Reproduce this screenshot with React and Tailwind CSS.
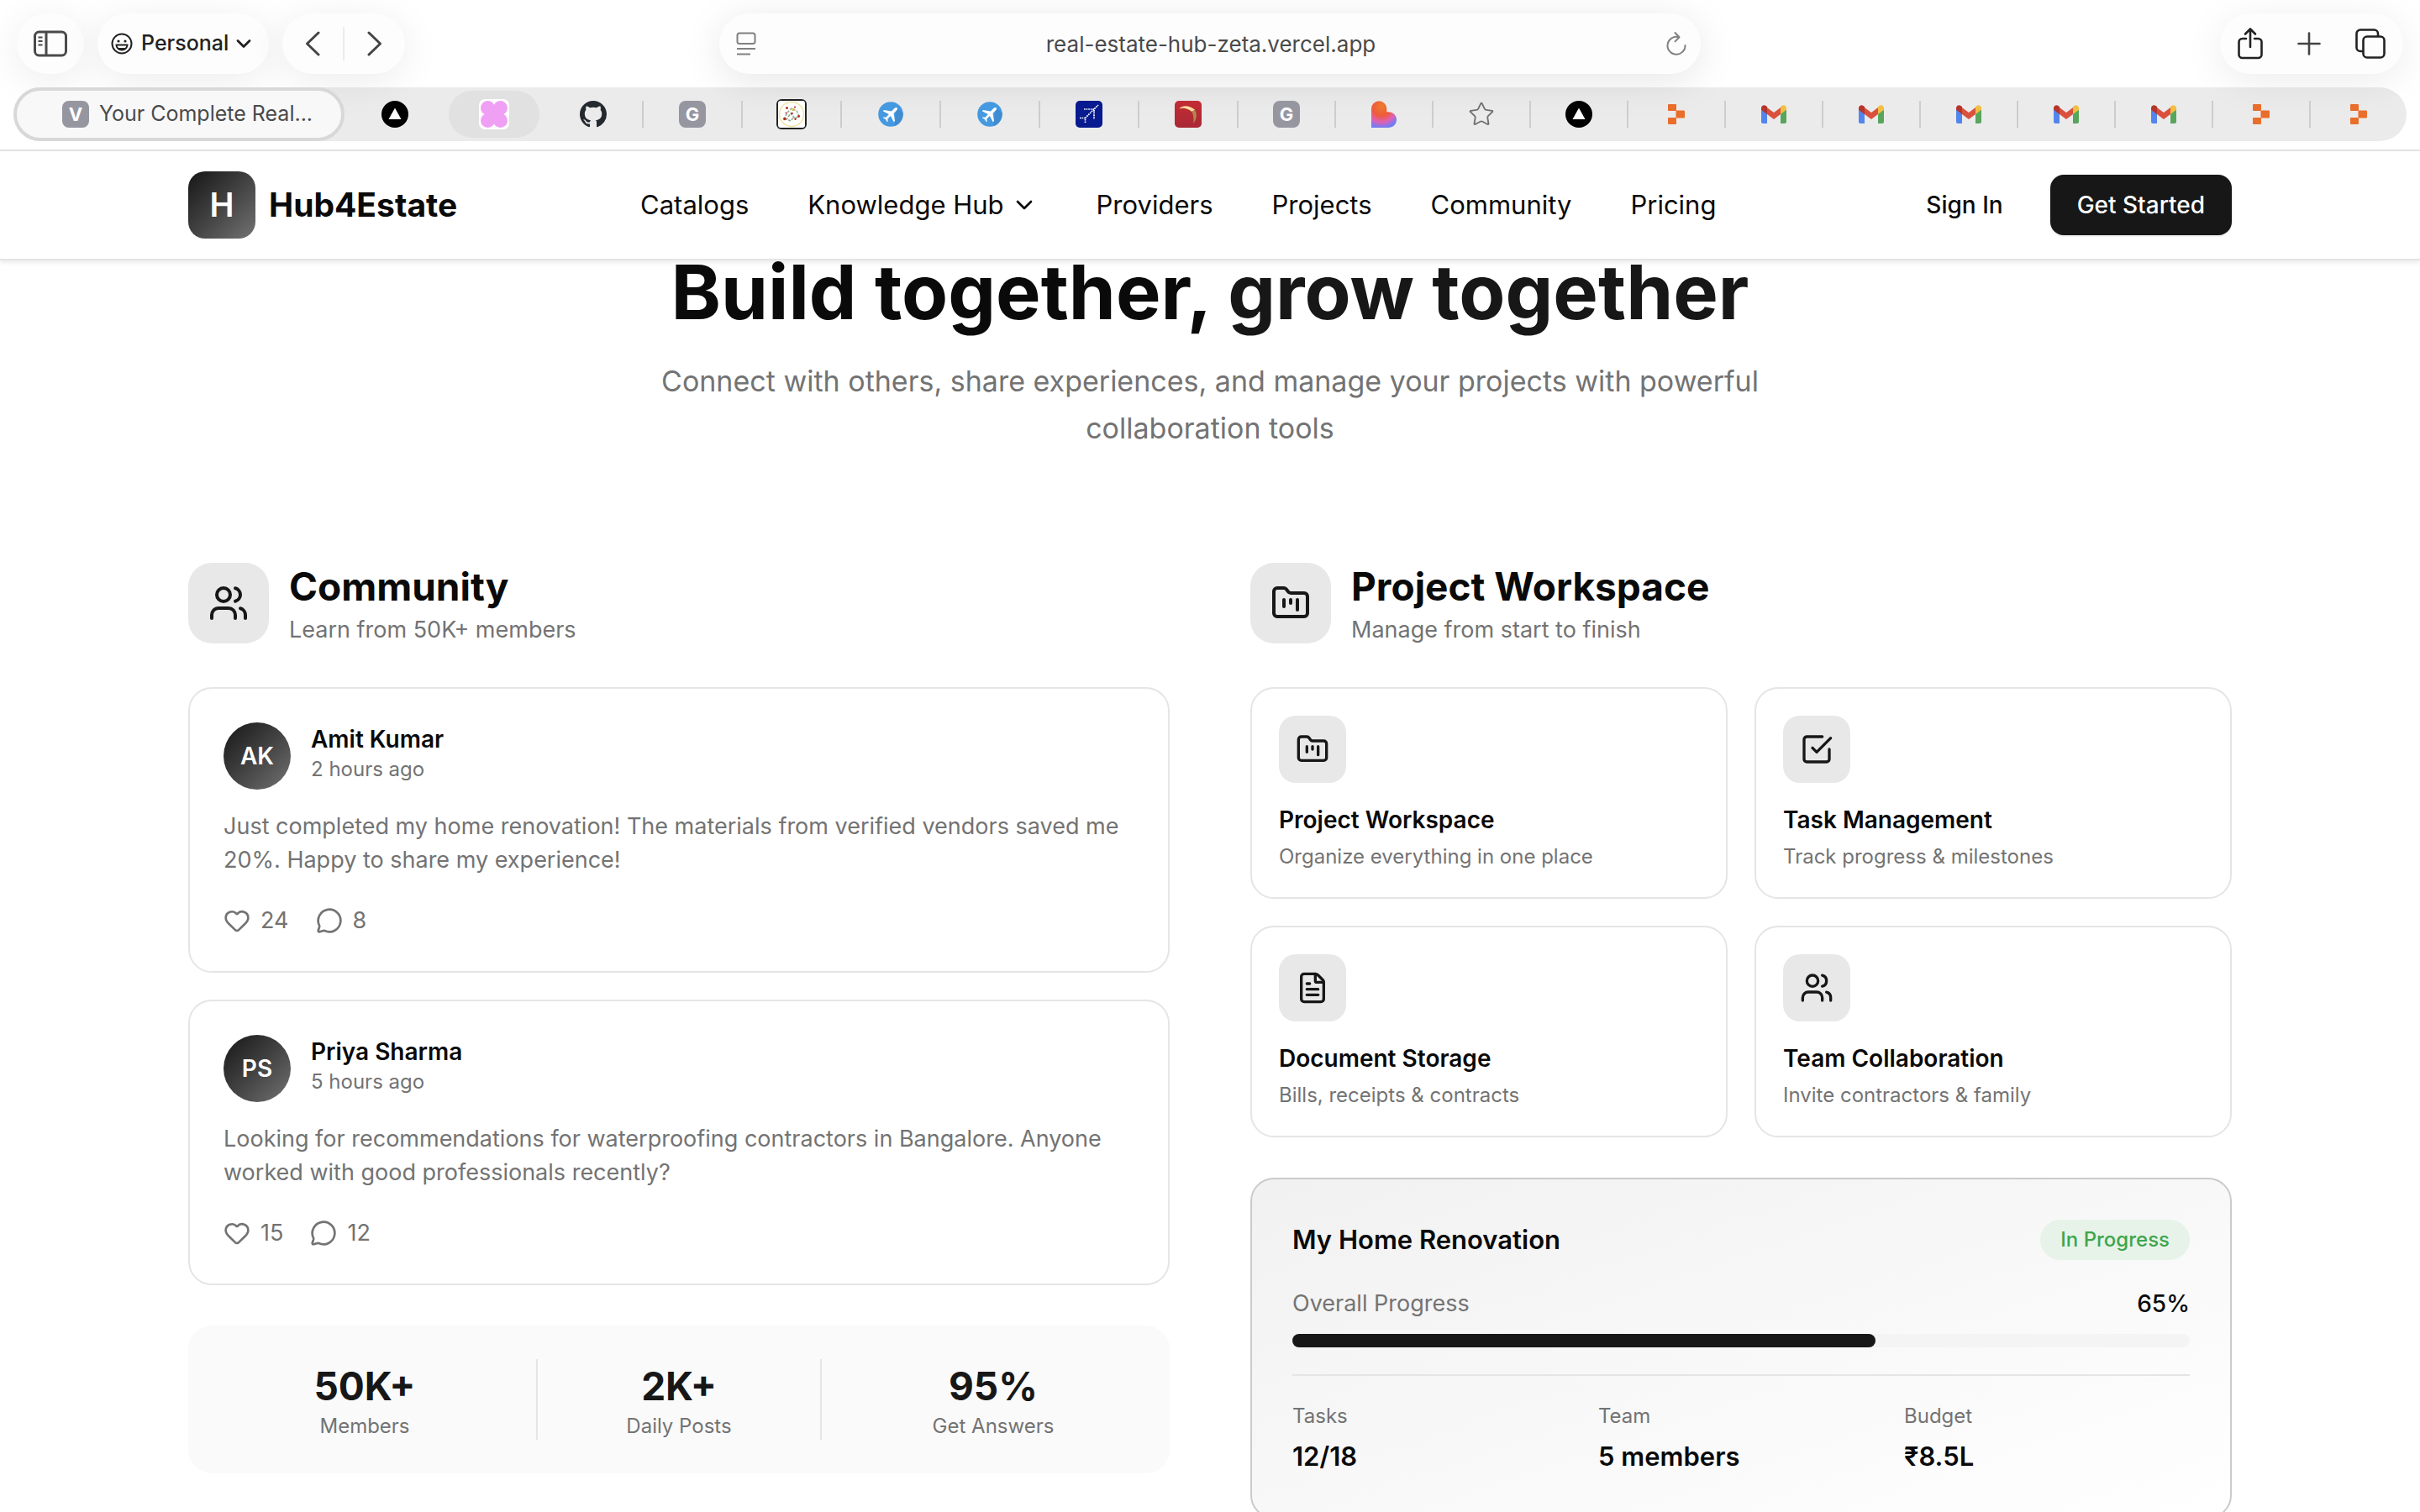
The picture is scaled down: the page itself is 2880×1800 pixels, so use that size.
import React from "react";
import {
  Users,
  FolderKanban,
  FileText,
  Heart,
  MessageCircle,
  ChevronDown,
  Star,
} from "lucide-react";

/* ---------- Browser chrome icons ---------- */

function SidebarIcon() {
  return (
    <svg viewBox="0 0 40 32" className="h-8 w-10" fill="none" stroke="#4a4a4a" strokeWidth="3">
      <rect x="1.5" y="2" width="37" height="28" rx="5" />
      <path d="M15 2v28" />
      <path d="M5.5 8.500h5M5.500 13h5M5.500 17.500h5" strokeWidth="2" />
    </svg>
  );
}

function SmileIcon() {
  return (
    <svg viewBox="0 0 26 26" className="mr-[6px] size-[26px]" fill="none" stroke="#222" strokeWidth="2">
      <circle cx="13" cy="13" r="11.500" />
      <circle cx="9" cy="10" r="1.600" fill="#222" stroke="none" />
      <circle cx="17" cy="10" r="1.600" fill="#222" stroke="none" />
      <path d="M6.500 14.500h13a6.500 6 0 0 1-13 0Z" />
      <path d="M8 18h10a5.500 4 0 0 1-10 0Z" fill="#222" stroke="none" />
    </svg>
  );
}

function BackIcon() {
  return (
    <svg viewBox="0 0 18 30" className="h-[30px] w-[18px]" fill="none" stroke="#444" strokeWidth="3" strokeLinecap="round" strokeLinejoin="round">
      <path d="M16 2 2.500 15 16 28" />
    </svg>
  );
}

function ForwardIcon() {
  return (
    <svg viewBox="0 0 18 30" className="h-[30px] w-[18px]" fill="none" stroke="#444" strokeWidth="3" strokeLinecap="round" strokeLinejoin="round">
      <path d="M2 2 15.500 15 2 28" />
    </svg>
  );
}

function ReaderIcon() {
  return (
    <svg viewBox="0 0 24 28" className="h-7 w-6" fill="none" stroke="#808080" strokeWidth="2">
      <rect x="1.500" y="1.500" width="21" height="12.500" rx="2.500" />
      <path d="M1 20h22M1 26.500h16" />
    </svg>
  );
}

function ReloadIcon() {
  return (
    <svg viewBox="0 0 26 30" className="h-[30px] w-[26px]" fill="none" stroke="#808080" strokeWidth="2" strokeLinecap="round" strokeLinejoin="round">
      <path d="M16 7.200A10.500 10.500 0 1 0 23.500 17" />
      <path d="M11.500 2l5 5.200-5 5.200" />
    </svg>
  );
}

function ShareIcon() {
  return (
    <svg viewBox="0 0 32 40" className="h-10 w-8" fill="none" stroke="#222" strokeWidth="2.600" strokeLinecap="round" strokeLinejoin="round">
      <path d="M11 14H6.500a4 4 0 0 0-4 4v15a4 4 0 0 0 4 4h19a4 4 0 0 0 4-4V18a4 4 0 0 0-4-4H21" />
      <path d="M16 24V3M10 8.500 16 2.500l6 6" />
    </svg>
  );
}

function PlusIcon() {
  return (
    <svg viewBox="0 0 28 28" className="size-7" fill="none" stroke="#444" strokeWidth="2.600" strokeLinecap="round">
      <path d="M14 1.500v25M1.500 14h25" />
    </svg>
  );
}

function TabsIcon() {
  return (
    <svg viewBox="0 0 38 38" className="size-[38px]" fill="none" stroke="#222" strokeWidth="2.600">
      <path d="M10.500 28H7a4.500 4.500 0 0 1-4.500-4.500V7A4.500 4.500 0 0 1 7 2.500h16.500A4.500 4.500 0 0 1 28 7v3" />
      <rect x="10.500" y="10.500" width="25" height="25" rx="4.500" />
    </svg>
  );
}

/* ---------- Favicons ---------- */

function LetterIcon({ letter }) {
  return (
    <span className="flex size-8 items-center justify-center rounded-lg bg-[#9696a1] text-[22px] leading-8 font-bold text-white">
      {letter}
    </span>
  );
}

function TriangleIcon() {
  return (
    <svg viewBox="0 0 32 32" className="size-8">
      <circle cx="16" cy="16" r="16" fill="#000" />
      <path d="M16 8.500 23.500 22h-15Z" fill="#fff" />
    </svg>
  );
}

function CloverIcon() {
  return (
    <svg viewBox="0 0 36 36" className="size-9">
      <rect width="36" height="36" rx="7" fill="#fff" />
      <g fill="#f0a0f4">
        <circle cx="10.500" cy="10.500" r="8.500" />
        <circle cx="25.500" cy="10.500" r="8.500" />
        <circle cx="10.500" cy="25.500" r="8.500" />
        <circle cx="25.500" cy="25.500" r="8.500" />
        <rect x="9" y="9" width="18" height="18" />
      </g>
    </svg>
  );
}

function GithubIcon() {
  return (
    <svg viewBox="0 0 16 16" className="size-8" fill="#24292f">
      <path d="M8 0C3.580 0 0 3.580 0 8c0 3.540 2.290 6.530 5.470 7.590.4.070.55-.17.55-.38 0-.19-.01-.82-.01-1.490-2.010.37-2.530-.49-2.690-.94-.09-.23-.48-.94-.82-1.130-.28-.15-.68-.52-.01-.53.63-.01 1.080.58 1.230.82.72 1.210 1.870.87 2.330.66.07-.52.28-.87.51-1.070-1.780-.2-3.640-.89-3.640-3.950 0-.87.31-1.590.82-2.150-.08-.2-.36-1.020.08-2.120 0 0 .67-.21 2.200.82.64-.18 1.320-.27 2-.27s1.360.09 2 .27c1.530-1.040 2.200-.82 2.200-.82.44 1.100.16 1.920.08 2.120.51.56.82 1.270.82 2.150 0 3.070-1.870 3.750-3.650 3.950.29.25.54.73.54 1.480 0 1.070-.01 1.930-.01 2.200 0 .21.15.46.55.38A8.010 8.010 0 0 0 16 8c0-4.420-3.580-8-8-8Z" />
    </svg>
  );
}

function WreathIcon() {
  return (
    <svg viewBox="0 0 36 36" className="size-9">
      <rect width="36" height="36" rx="6" fill="#222" />
      <rect x="2" y="2" width="32" height="32" rx="3" fill="#fff" />
      <circle cx="18" cy="18" r="14.500" fill="none" stroke="#f3e3a4" strokeWidth="1.500" />
      <path d="M9 24l4-8 5-5 6 3 3 6-5 3-5-6-5 7 5 2 4-5" fill="none" stroke="#93a88c" strokeWidth="1.600" strokeDasharray="3 1.500" />
      <g fill="#b02a2a">
        <circle cx="12.500" cy="10.500" r="1.500" />
        <circle cx="22" cy="9.500" r="1.100" />
        <circle cx="9.800" cy="23.500" r="1.800" />
        <circle cx="18.500" cy="17" r="1.300" />
        <circle cx="26.500" cy="20.500" r="1.400" />
        <circle cx="22.500" cy="23.800" r="1.200" />
        <circle cx="11.500" cy="16.500" r="1" />
      </g>
      <circle cx="20" cy="12.500" r="1.700" fill="#e6b74f" />
    </svg>
  );
}

function PlaneIcon() {
  return (
    <svg viewBox="0 0 32 32" className="size-8">
      <circle cx="16" cy="16" r="14.800" fill="#4599e0" />
      <path d="M23 8.500 30.500 14a14.800 14.800 0 0 1-10 16Z" fill="#3f8cd0" />
      <path d="M23.600 8.400c-.8-.8-2.200-.3-3.200.7l-3.400 3.300-9-1.400-1.300 1.300 7.200 3.800-3.500 3.600-2.800-.3-.9.900 3.300 1.700 1.700 3.300.9-.9-.3-2.800 3.600-3.500L19.700 25.300l1.300-1.300-1.400-9 3.300-3.400c1-1 1.500-2.400.7-3.200Z" fill="#fff" />
    </svg>
  );
}

function FlightPathIcon() {
  return (
    <svg viewBox="0 0 32 32" className="size-8">
      <rect width="32" height="32" rx="5" fill="#071a8f" />
      <path d="M10 10h12v12M5 20.500h6.500V27M11.500 20.500 27 5" fill="none" stroke="#fff" strokeWidth="1.700" strokeDasharray="1.700 .9" />
    </svg>
  );
}

function BoomerangIcon() {
  return (
    <svg viewBox="0 0 32 32" className="size-8">
      <defs>
        <linearGradient id="boomerang-bg" x1="0" y1="0" x2="0" y2="1">
          <stop offset="0" stopColor="#c42c34" />
          <stop offset="1" stopColor="#a92835" />
        </linearGradient>
      </defs>
      <rect width="32" height="32" rx="5" fill="url(#boomerang-bg)" />
      <path d="M5.500 9.500C9 5 17 5 24 10.500L20.500 13C15 9 10 8 5.500 9.500Z" fill="#fbdc9c" />
      <path d="M24 10.500c3 6 2 12-2 16.500 1-5 .5-10-1.500-14Z" fill="#b08a50" />
    </svg>
  );
}

function LovableIcon() {
  return (
    <svg viewBox="0 0 32 32" className="size-8">
      <defs>
        <radialGradient id="heart-fill" cx=".4" cy=".2" r=".9">
          <stop offset="0" stopColor="#ee7d2c" />
          <stop offset=".4" stopColor="#ee5a3c" />
          <stop offset=".65" stopColor="#e060b4" />
          <stop offset=".9" stopColor="#6f7cf8" />
        </radialGradient>
      </defs>
      <path d="M1 32V9.500a9 9 0 0 1 18.300 0v3.700h2.400a9.400 9.400 0 0 1 0 18.800Z" fill="url(#heart-fill)" />
    </svg>
  );
}

function ArrowBlocksIcon() {
  return (
    <svg viewBox="0 0 20 24" className="h-6 w-5" fill="#e96d2b">
      <rect x="0" y="0" width="10" height="8" rx="1" />
      <rect x="9.500" y="7.500" width="10.500" height="9" rx="1" />
      <rect x="0" y="16" width="10" height="8" rx="1" />
    </svg>
  );
}

function GmailIcon() {
  return (
    <svg viewBox="0 0 30 22" className="h-[22px] w-[30px]">
      <path d="M0 5v15a2 2 0 0 0 2 2h5V10Z" fill="#5286ec" />
      <path d="M30 5v15a2 2 0 0 1-2 2h-5V10Z" fill="#58a55c" />
      <path d="M7 3v8l8 6 8-6V3l-8 6Z" fill="#d9513e" />
      <path d="M0 3.500C0 .5 3.400-.8 5.600.9L7 2v9L0 5.700Z" fill="#b5352b" />
      <path d="M30 3.500c0-3-3.400-4.300-5.600-2.600L23 2v9l7-5.300Z" fill="#f2bf42" />
    </svg>
  );
}

const pinnedTabs = [
  { name: "Vercel", icon: <TriangleIcon />, wide: true },
  { name: "Clover", icon: <CloverIcon />, wide: true, hovered: true },
  { name: "GitHub", icon: <GithubIcon />, wide: true },
  { name: "G page", icon: <LetterIcon letter="G" />, wide: true, rule: true },
  { name: "Wreath", icon: <WreathIcon />, wide: true, rule: true },
  { name: "Flights", icon: <PlaneIcon />, wide: true, rule: true },
  { name: "Flights", icon: <PlaneIcon />, wide: true, rule: true },
  { name: "Flight path", icon: <FlightPathIcon />, wide: true, rule: true },
  { name: "Boomerang", icon: <BoomerangIcon />, wide: true, rule: true },
  { name: "G page", icon: <LetterIcon letter="G" />, rule: true },
  { name: "Lovable", icon: <LovableIcon />, rule: true },
  { name: "Favorites", icon: <Star className="size-8 text-[#707070]" strokeWidth={1.4} />, rule: true },
  { name: "Vercel", icon: <TriangleIcon />, rule: true },
  { name: "Blocks", icon: <ArrowBlocksIcon />, rule: true },
  { name: "Gmail", icon: <GmailIcon />, rule: true },
  { name: "Gmail", icon: <GmailIcon />, rule: true },
  { name: "Gmail", icon: <GmailIcon />, rule: true },
  { name: "Gmail", icon: <GmailIcon />, rule: true },
  { name: "Gmail", icon: <GmailIcon />, rule: true },
  { name: "Blocks", icon: <ArrowBlocksIcon />, rule: true },
  { name: "Blocks", icon: <ArrowBlocksIcon />, rule: true },
];

function BrowserChrome() {
  return (
    <div className="overflow-hidden border-b-2 border-[#e6e6e6] bg-white px-4 pt-4 pb-[10px]">
      <div className="flex h-[72px] items-center justify-between px-1">
        <div className="flex flex-1 gap-4">
          <button aria-label="Show sidebar" className="flex h-[72px] w-20 items-center justify-center rounded-full bg-[#fdfdfd] shadow-[0_8px_48px_rgba(0,0,0,0.08)]">
            <SidebarIcon />
          </button>
          <button className="flex h-[72px] items-center gap-1 rounded-full bg-[#fdfdfd] px-4 text-[25px] font-medium text-[#222] shadow-[0_8px_48px_rgba(0,0,0,0.08)]">
            <SmileIcon />
            Personal
            <ChevronDown className="size-7" strokeWidth={2.4} />
          </button>
          <div className="flex h-[72px] items-center rounded-full bg-[#fdfdfd] shadow-[0_8px_48px_rgba(0,0,0,0.08)]">
            <button aria-label="Back" className="flex h-full w-[72px] items-center justify-center">
              <BackIcon />
            </button>
            <span className="h-10 w-[2px] bg-[#ececec]" />
            <button aria-label="Forward" className="flex h-full w-[72px] items-center justify-center">
              <ForwardIcon />
            </button>
          </div>
        </div>
        <div className="flex h-[72px] w-[1168px] items-center rounded-full bg-[#fdfdfd] pr-4 pl-5 shadow-[0_8px_48px_rgba(0,0,0,0.1)]">
          <button aria-label="Reader view"><ReaderIcon /></button>
          <input
            aria-label="Address"
            defaultValue="real-estate-hub-zeta.vercel.app"
            className="min-w-0 flex-1 bg-transparent text-center text-[26px] text-[#4a4a4a] outline-none"
          />
          <button aria-label="Reload"><ReloadIcon /></button>
        </div>
        <div className="flex flex-1 justify-end">
          <div className="flex h-[72px] items-center gap-10 rounded-full bg-[#fdfdfd] px-5 shadow-[0_8px_48px_rgba(0,0,0,0.08)]">
            <button aria-label="Share"><ShareIcon /></button>
            <button aria-label="New tab"><PlusIcon /></button>
            <button aria-label="Show tabs"><TabsIcon /></button>
          </div>
        </div>
      </div>
      <div className="mt-4 flex h-16 items-center rounded-full bg-black/8">
        <button className="flex h-full w-[394px] shrink-0 items-center justify-center gap-3 rounded-full border-4 border-[#d8d8d8] bg-[#f8f8f8] pl-5 text-[25px] text-[#4a4a4a]">
          <LetterIcon letter="V" />
          Your Complete Real...
        </button>
        {pinnedTabs.map((tab, i) => (
          <div key={i} className={tab.wide ? "flex h-full flex-[118] items-center" : "flex h-full flex-[116] items-center"}>
            <span className={tab.rule ? "h-8 w-[2px] bg-[#cdcdcd]" : "h-8 w-[2px]"} />
            <button
              aria-label={tab.name}
              className={
                tab.hovered
                  ? "mx-1 flex h-14 flex-1 items-center justify-center rounded-full bg-[#e1e1e1]"
                  : "flex h-14 flex-1 items-center justify-center"
              }
            >
              {tab.icon}
            </button>
          </div>
        ))}
      </div>
    </div>
  );
}

/* ---------- Site ---------- */

function SiteHeader() {
  return (
    <header className="relative z-10 border-b-2 border-[#e5e5e5] bg-white shadow-[0_2px_6px_rgba(0,0,0,0.1)]">
      <div className="mx-auto flex h-32 max-w-[2560px] items-center justify-between px-16">
        <a href="#" className="flex items-center gap-4">
          <span className="flex size-20 items-center justify-center rounded-[20px] bg-linear-to-br from-[#171717] to-[#737373] text-[39px] font-semibold text-white">
            H
          </span>
          <span className="text-[39px] font-bold">Hub4Estate</span>
        </a>
        <nav className="flex items-center gap-[70px] text-[31px]">
          <a href="#">Catalogs</a>
          <button className="flex items-center gap-2">
            Knowledge Hub
            <ChevronDown className="size-8" />
          </button>
          <a href="#">Providers</a>
          <a href="#">Projects</a>
          <a href="#">Community</a>
          <a href="#">Pricing</a>
        </nav>
        <div className="flex items-center gap-6 text-[28px] font-medium">
          <a href="#" className="px-8">Sign In</a>
          <button className="h-[72px] rounded-2xl bg-[#171717] px-8 text-white shadow-sm">Get Started</button>
        </div>
      </div>
    </header>
  );
}

function SectionHeader({ icon: Icon, title, subtitle }) {
  return (
    <div className="mb-12 flex items-center gap-6">
      <span className="flex size-24 items-center justify-center rounded-[28px] bg-[#e8e8e8] text-[#171717]">
        <Icon className="size-12" />
      </span>
      <div>
        <h3 className="text-[46px] leading-[64px] font-bold">{title}</h3>
        <p className="text-[27px] leading-10 text-[#737373]">{subtitle}</p>
      </div>
    </div>
  );
}

const posts = [
  {
    initials: "AK",
    name: "Amit Kumar",
    time: "2 hours ago",
    body: "Just completed my home renovation! The materials from verified vendors saved me 20%. Happy to share my experience!",
    likes: 24,
    comments: 8,
  },
  {
    initials: "PS",
    name: "Priya Sharma",
    time: "5 hours ago",
    body: "Looking for recommendations for waterproofing contractors in Bangalore. Anyone worked with good professionals recently?",
    likes: 15,
    comments: 12,
  },
];

function PostCard({ post }) {
  return (
    <article className="rounded-[28px] border-2 border-[#e5e5e5] bg-white p-10">
      <div className="mb-6 flex items-start gap-6">
        <span className="flex size-20 items-center justify-center rounded-full bg-linear-to-br from-[#171717] to-[#737373] text-[28px] font-semibold text-white">
          {post.initials}
        </span>
        <div>
          <h4 className="text-[28px] leading-10 font-semibold">{post.name}</h4>
          <p className="text-[24px] leading-8 text-[#737373]">{post.time}</p>
        </div>
      </div>
      <p className="mb-8 text-[27px] leading-10 text-[#737373]">{post.body}</p>
      <div className="flex items-center gap-8 text-[27px] leading-10 text-[#737373]">
        <button aria-label="Likes" className="flex items-center gap-3">
          <Heart className="size-8" />
          {post.likes}
        </button>
        <button aria-label="Comments" className="flex items-center gap-3">
          <MessageCircle className="size-8" />
          {post.comments}
        </button>
      </div>
    </article>
  );
}

function Stat({ value, label, divided }) {
  return (
    <div className={divided ? "border-x-2 border-[#e5e5e5] text-center" : "text-center"}>
      <p className="text-[46px] leading-[64px] font-bold text-[#171717]">{value}</p>
      <p className="text-[24px] leading-8 text-[#737373]">{label}</p>
    </div>
  );
}

function TaskIcon({ className }) {
  return (
    <svg viewBox="0 0 24 24" className={className} fill="none" stroke="currentColor" strokeWidth="2" strokeLinecap="round" strokeLinejoin="round">
      <path d="m9 11 3 3L22 4" />
      <path d="M21 12v7a2 2 0 0 1-2 2H5a2 2 0 0 1-2-2V5a2 2 0 0 1 2-2h11" />
    </svg>
  );
}

const features = [
  { icon: FolderKanban, title: "Project Workspace", text: "Organize everything in one place" },
  { icon: TaskIcon, title: "Task Management", text: "Track progress & milestones" },
  { icon: FileText, title: "Document Storage", text: "Bills, receipts & contracts" },
  { icon: Users, title: "Team Collaboration", text: "Invite contractors & family" },
];

function FeatureCard({ icon: Icon, title, text }) {
  return (
    <article className="rounded-[28px] border-2 border-[#e5e5e5] bg-white p-8">
      <span className="mb-6 flex size-20 items-center justify-center rounded-[20px] bg-[#e8e8e8] text-[#171717]">
        <Icon className="size-10" />
      </span>
      <h4 className="mb-2 text-[28px] leading-10 font-semibold">{title}</h4>
      <p className="text-[24px] leading-8 text-[#737373]">{text}</p>
    </article>
  );
}

const facts = [
  { label: "Tasks", value: "12/18" },
  { label: "Team", value: "5 members" },
  { label: "Budget", value: "₹8.5L" },
];

function ProgressCard() {
  const progress = 65;
  return (
    <article className="mt-12 rounded-[28px] border-2 border-[#cbcbcb] bg-linear-to-br from-[#f1f1f1] to-white p-12">
      <div className="mb-8 flex items-center justify-between">
        <h4 className="text-[31px] leading-[48px] font-semibold">My Home Renovation</h4>
        <span className="rounded-full bg-[#e7f3e9] px-6 text-[24px] leading-[48px] font-medium text-[#3fa54b]">In Progress</span>
      </div>
      <div className="mb-4 flex items-center justify-between leading-10">
        <span className="text-[27px] text-[#737373]">Overall Progress</span>
        <span className="text-[28px] font-medium">{progress}%</span>
      </div>
      <div role="progressbar" aria-label="Overall Progress" aria-valuenow={progress} className="h-4 rounded-full bg-[#f4f4f4]">
        <div className="h-4 rounded-full bg-[#171717]" style={{ width: `${progress}%` }} />
      </div>
      <div className="mt-8 grid grid-cols-3 gap-6 border-t-2 border-[#e5e5e5] pt-8">
        {facts.map((fact) => (
          <div key={fact.label}>
            <p className="mb-2 text-[24px] leading-8 text-[#737373]">{fact.label}</p>
            <p className="text-[31px] leading-[48px] font-semibold">{fact.value}</p>
          </div>
        ))}
      </div>
    </article>
  );
}

export default function App() {
  return (
    <div className="h-screen overflow-hidden bg-white font-[Inter,'Noto_Sans',sans-serif] text-[#0a0a0a]">
      <BrowserChrome />
      <SiteHeader />
      <main className="mx-auto max-w-[2560px] px-16">
        <div className="-mt-[10px] mb-32 text-center">
          <h2 className="text-[90px] leading-[96px] font-bold">
            Build together, <span className="text-[#171717]">grow together</span>
          </h2>
          <p className="mx-auto mt-[30px] max-w-[1344px] text-[34px] leading-[56px] text-[#737373]">
            Connect with others, share experiences, and manage your projects with powerful collaboration tools
          </p>
        </div>
        <div className="grid grid-cols-2 gap-24">
          <section>
            <SectionHeader icon={Users} title="Community" subtitle="Learn from 50K+ members" />
            <div className="flex flex-col gap-8">
              {posts.map((post) => (
                <PostCard key={post.initials} post={post} />
              ))}
            </div>
            <div className="mt-12 grid grid-cols-[6fr_5fr_6fr] rounded-[28px] bg-[#fafafa] px-[6px] py-10">
              <Stat value="50K+" label="Members" />
              <Stat value="2K+" label="Daily Posts" divided />
              <Stat value="95%" label="Get Answers" />
            </div>
          </section>
          <section>
            <SectionHeader icon={FolderKanban} title="Project Workspace" subtitle="Manage from start to finish" />
            <div className="grid grid-cols-2 gap-8">
              {features.map((feature) => (
                <FeatureCard key={feature.title} {...feature} />
              ))}
            </div>
            <ProgressCard />
          </section>
        </div>
      </main>
    </div>
  );
}
